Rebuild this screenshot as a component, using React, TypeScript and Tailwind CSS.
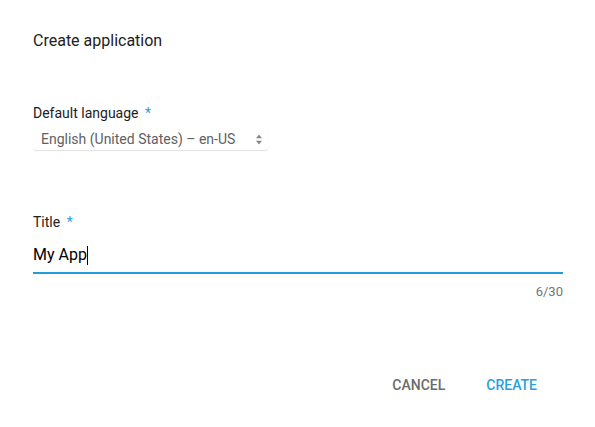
import React, { useState } from 'react';

const App = () => {
  const [title, setTitle] = useState('My App');

  return (
    <div className="w-[595px] h-[427px] bg-white font-['Roboto',sans-serif] text-[#212121]">
      <div className="pt-[31px] px-[33px]">
        <h1 className="text-[16px] leading-[20px]">Create application</h1>

        {/* Default language */}
        <div className="mt-[53px]">
          <label className="block text-[14px] leading-[18px]">
            Default language <span className="text-[#2a9fe0] ml-[3px]">*</span>
          </label>
          <div className="mt-[7px] w-[235px] h-[21px] rounded-[3px] shadow-[0_1px_1px_rgba(0,0,0,0.12)] flex items-center justify-between pl-[8px] pr-[5px]">
            <span className="text-[14px] text-[#616161]">English (United States) – en-US</span>
            <svg width="8" height="13" viewBox="0 0 8 13">
              <path d="M4 1.5 L7 5.3 L1 5.3 Z" fill="#888" />
              <path d="M4 11.5 L7 7.7 L1 7.7 Z" fill="#888" />
            </svg>
          </div>
        </div>

        {/* Title */}
        <div className="mt-[63px]">
          <label className="block text-[14px] leading-[18px]">
            Title <span className="text-[#2a9fe0] ml-[3px]">*</span>
          </label>
          <div className="mt-[14px] w-[530px] border-b-2 border-[#209cdf] pb-[7px] flex items-center">
            <span className="text-[16px] leading-[20px] text-black">{title}</span>
            <span className="inline-block w-[1px] h-[19px] bg-black" />
            <input className="hidden" value={title} onChange={(e) => setTitle(e.target.value)} />
          </div>
          <div className="w-[530px] text-right text-[13px] leading-[16px] text-[#757575] mt-[10px]">6/30</div>
        </div>

        {/* Actions */}
        <div className="mt-[75px] w-[530px] flex justify-end gap-[41px] pr-[26px]">
          <button className="text-[14px] font-medium text-[#6b6b6b]">CANCEL</button>
          <button className="text-[14px] font-medium text-[#2a9fe0]">CREATE</button>
        </div>
      </div>
    </div>
  );
};

export default App;
